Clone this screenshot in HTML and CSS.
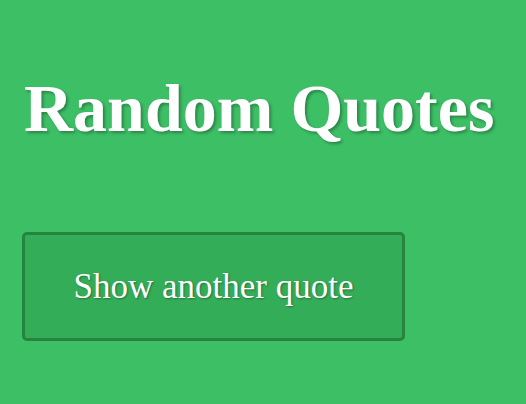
FILE: index.html
```html
<!DOCTYPE html>
<html lang="en">
<head>
<meta charset="utf-8">
<title>Random Quotes</title>
<link rel="stylesheet" href="styles.css">
</head>
<body>
<main class="page">
  <h1 class="title">Random Quotes</h1>
  <button class="quote-btn" type="button">Show another quote</button>
</main>
</body>
</html>
```
FILE: styles.css
```css
html, body {
  margin: 0;
  padding: 0;
  background: #3dbf66;
  height: 100%;
}
.page {
  padding: 0 22px;
  font-family: "Liberation Serif", "DejaVu Serif", serif;
  color: #fff;
}
.title {
  margin: 0;
  padding-top: 70px;
  padding-left: 2px;
  font-size: 68px;
  line-height: 76px;
  font-weight: 700;
  letter-spacing: 0;
  white-space: nowrap;
  text-shadow: 2px 2px 3px rgba(0, 0, 0, 0.3);
}
.quote-btn {
  display: block;
  margin-top: 86px;
  box-sizing: border-box;
  width: 383px;
  height: 109px;
  background: #34ad59;
  border: 3px solid #27843f;
  border-radius: 5px;
  color: #fff;
  font-family: "Liberation Serif", "DejaVu Serif", serif;
  font-size: 35px;
  text-shadow: 1px 1px 2px rgba(0, 0, 0, 0.35);
  padding: 0;
}
```
